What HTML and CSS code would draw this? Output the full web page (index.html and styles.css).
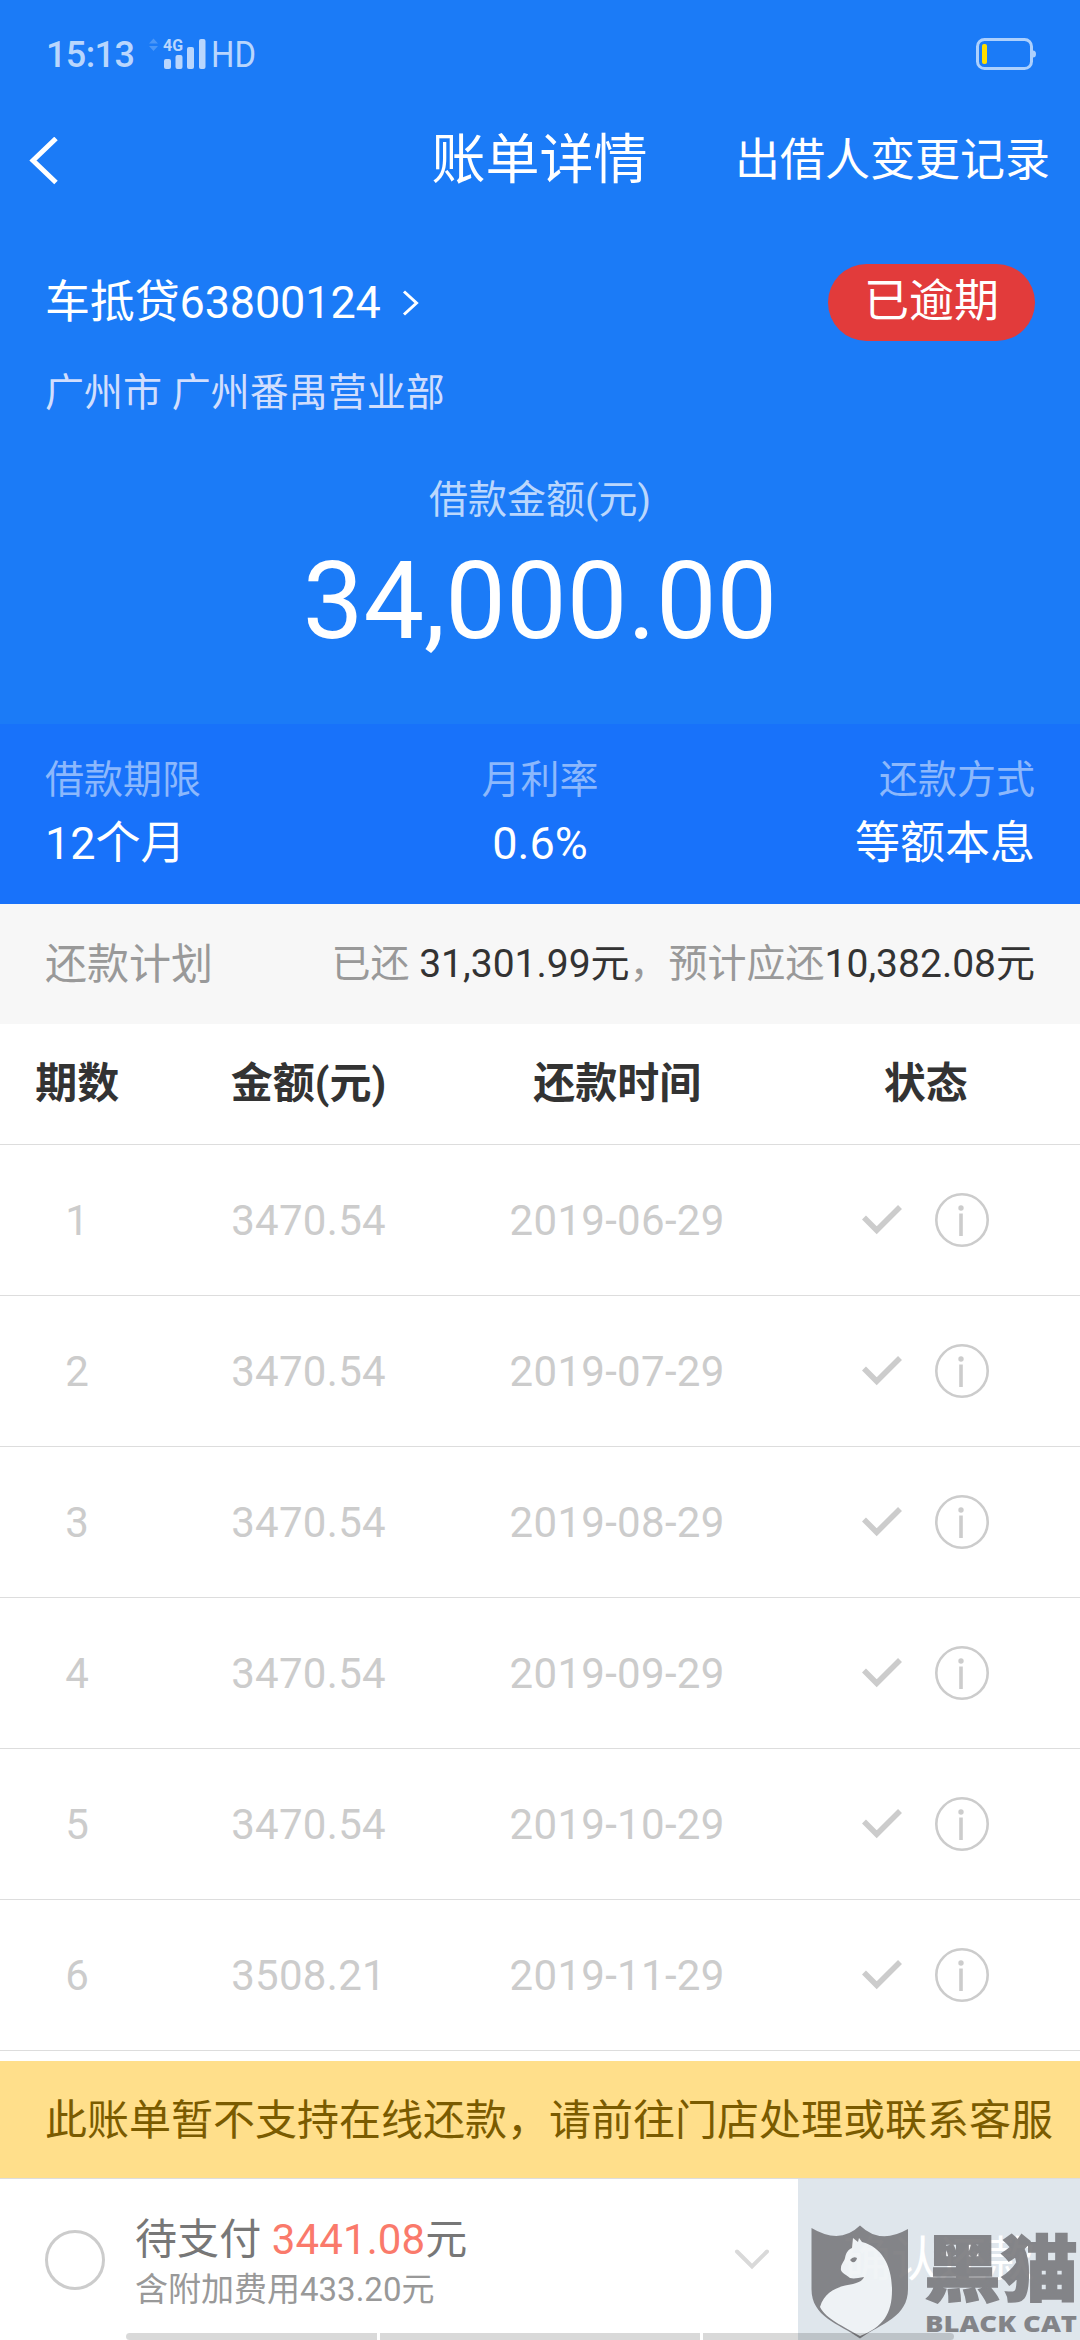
FILE: index.html
```html
<!DOCTYPE html>
<html lang="zh-CN">
<head>
  <meta charset="UTF-8">
  <meta name="viewport" content="width=device-width, initial-scale=1.0">
  <title>账单详情</title>
  <link rel="stylesheet" href="styles.css">
</head>

<body>
  <svg class="symbols">
    <symbol id="check" viewBox="0 0 40 30">
      <path d="M2 12.500L14.700 25.200L38 2" fill="none" stroke="#ccc" stroke-width="5.600"/>
    </symbol>
    <symbol id="info" viewBox="0 0 54 54">
      <circle cx="27" cy="27" r="25.700" fill="none" stroke="#ccc" stroke-width="2.600"/>
      <circle cx="26" cy="15" r="2.700" fill="#ccc"/>
      <path d="M26 20.500V43" stroke="#ccc" stroke-width="3.600"/>
    </symbol>
  </svg>

  <header>
    <div class="status-bar">
      <span class="time">15:13</span>
      <svg class="signal" width="112" height="36" viewBox="0 0 112 36">
        <path d="M0 6.500l4.500-5 4.500 5zM0 9l4.500 5 4.500-5z" opacity=".3"/>
        <rect x="15" y="22" width="7" height="10" rx="2"/>
        <rect x="26.500" y="18" width="7" height="14" rx="2"/>
        <rect x="38" y="10" width="7" height="22" rx="2"/>
        <rect x="50" y="2" width="6.500" height="30" rx="2"/>
        <text x="14" y="14" font-size="17" font-weight="700" textLength="20" lengthAdjust="spacingAndGlyphs">4G</text>
        <text x="62" y="30" font-size="36.500" textLength="45" lengthAdjust="spacingAndGlyphs">HD</text>
      </svg>
      <svg class="battery" width="62" height="34" viewBox="0 0 62 34">
        <rect x="1.500" y="1.500" width="54" height="29" rx="7" fill="none" stroke="#acd0fd" stroke-width="3"/>
        <path d="M57 12.500a3 3.500 0 0 1 0 7z" fill="#acd0fd"/>
        <rect x="6" y="6" width="5" height="20" rx="2" fill="#fd0"/>
      </svg>
    </div>
    <nav>
      <svg class="back" width="30" height="48" viewBox="0 0 30 48">
        <path d="M27 1.500L4 23.500l23 22" fill="none" stroke="#fff" stroke-width="5"/>
      </svg>
      <h1>账单详情</h1>
      <a class="record">出借人变更记录</a>
    </nav>
  </header>

  <section class="loan">
    <div class="loan-title">
      <span class="loan-name">车抵贷63800124</span>
      <svg width="18" height="26" viewBox="0 0 18 26">
        <path d="M2 1.500L14.500 13L2 24.500" fill="none" stroke="#fff" stroke-width="3"/>
      </svg>
      <span class="badge">已逾期</span>
    </div>
    <div class="branch">广州市 广州番禺营业部</div>
    <div class="amount-label">借款金额(元)</div>
    <div class="amount">34,000.00</div>
  </section>

  <section class="terms">
    <div>
      <label>借款期限</label>
      <p>12个月</p>
    </div>
    <div>
      <label>月利率</label>
      <p>0.6%</p>
    </div>
    <div>
      <label>还款方式</label>
      <p>等额本息</p>
    </div>
  </section>

  <div class="plan">
    <span class="plan-title">还款计划</span>
    <span>已还 <b>31,301.99元</b>，预计应还<b>10,382.08元</b></span>
  </div>

  <main>
    <div class="row head">
      <span>期数</span><span>金额(元)</span><span>还款时间</span><span>状态</span>
    </div>
    <div class="row">
      <span>1</span><span>3470.54</span><span>2019-06-29</span>
      <span class="state"><svg class="check"><use href="#check"/></svg><svg class="info"><use href="#info"/></svg></span>
    </div>
    <div class="row">
      <span>2</span><span>3470.54</span><span>2019-07-29</span>
      <span class="state"><svg class="check"><use href="#check"/></svg><svg class="info"><use href="#info"/></svg></span>
    </div>
    <div class="row">
      <span>3</span><span>3470.54</span><span>2019-08-29</span>
      <span class="state"><svg class="check"><use href="#check"/></svg><svg class="info"><use href="#info"/></svg></span>
    </div>
    <div class="row">
      <span>4</span><span>3470.54</span><span>2019-09-29</span>
      <span class="state"><svg class="check"><use href="#check"/></svg><svg class="info"><use href="#info"/></svg></span>
    </div>
    <div class="row">
      <span>5</span><span>3470.54</span><span>2019-10-29</span>
      <span class="state"><svg class="check"><use href="#check"/></svg><svg class="info"><use href="#info"/></svg></span>
    </div>
    <div class="row">
      <span>6</span><span>3508.21</span><span>2019-11-29</span>
      <span class="state"><svg class="check"><use href="#check"/></svg><svg class="info"><use href="#info"/></svg></span>
    </div>
  </main>

  <div class="notice">此账单暂不支持在线还款，请前往门店处理或联系客服</div>

  <footer>
    <div class="radio"></div>
    <div class="pay">
      <div class="pay-total">待支付 <em>3441.08</em>元</div>
      <div class="pay-fee">含附加费用433.20元</div>
    </div>
    <svg class="down" width="36" height="24" viewBox="0 0 36 24">
      <path d="M3 3.500l15 15 15-15" fill="none" stroke="#d9d9d9" stroke-width="4" stroke-linecap="round"/>
    </svg>
    <div class="confirm">确认还款</div>

    <!-- 黑猫水印 -->
    <svg class="watermark" width="282" height="125" viewBox="0 0 282 125">
      <path d="M13.500 13Q42 30 62 10.500Q82 30 110 14V74C110 102 84 108 62 123.500C40 108 13.500 102 13.500 74Z" fill="#7c7c80"/>
      <path d="M55 23L60 27L61 23L64 27C84 32 94 51 94 75C94 99 85 112 62 121C45 111 28 104 22 92C27 75 42 71 55 69C62 67 65 65 66 62C60 63 56 64 52 63C46 58 42 57 43 53C43 49 46 47 47 43C48 37 51 34 54 33Z" fill="#f0f4f6"/>
      <path d="M52 45q3-4 7-2q-1 5-5 4z" fill="#7c7c80"/>
      <g fill="#7c7c80">
        <text class="wm-cn" x="126" y="80" textLength="154" lengthAdjust="spacingAndGlyphs">黑猫</text>
        <text class="wm-en" x="127" y="117" textLength="152" lengthAdjust="spacingAndGlyphs">BLACK CAT</text>
      </g>
    </svg>
    <div class="gesture-bar"><i></i><i></i><i></i></div>
  </footer>
</body>
</html>
```
FILE: styles.css
```css
* {
  box-sizing: border-box;
}

body {
  margin: 0;
  width: 1080px;
  height: 2340px;
  overflow: hidden;
  background: #fff;
  font-family: Roboto, "Noto Sans CJK SC", sans-serif;
  color: #333;
}

.symbols {
  display: none;
}

header {
  height: 240px;
  background: #1b7bf7;
  color: #fff;
}

.status-bar {
  height: 110px;
  padding: 0 42px 0 46px;
  display: flex;
  align-items: center;
}

.time {
  width: 103px;
  font-size: 36px;
  line-height: 44px;
  letter-spacing: -.6px;
  color: #b9d6fd;
  font-weight: 500;
}

.signal {
  fill: #b9d6fd;
  overflow: visible;
}

.battery {
  margin-left: auto;
}

nav {
  height: 100px;
  padding: 1px 30px 0 29px;
  display: grid;
  grid-template-columns: 1fr auto 1fr;
  align-items: center;
}

h1 {
  margin: 0;
  font-size: 54px;
  line-height: 80px;
  font-weight: 400;
}

.record {
  justify-self: end;
  font-size: 45px;
  line-height: 66px;
}

.loan {
  height: 484px;
  padding: 24px 45px 0;
  background: #1b7bf7;
  color: #fff;
}

.loan-title {
  height: 77px;
  display: flex;
  align-items: center;
  font-size: 45px;
  line-height: 66px;
}

.loan-name {
  letter-spacing: -.15px;
}

.loan-title svg {
  margin-left: 21px;
}

.badge {
  margin-left: auto;
  padding: 0 36px;
  height: 77px;
  line-height: 75px;
  border-radius: 39px;
  background: #e23b3b;
}

.branch {
  margin-top: 23px;
  font-size: 39px;
  line-height: 58px;
  color: #d1defd;
}

.amount-label {
  margin-top: 49px;
  font-size: 39px;
  line-height: 58px;
  text-align: center;
  color: #bad7fd;
}

.amount {
  font-size: 108px;
  line-height: 144px;
  text-align: center;
}

.terms {
  height: 180px;
  padding: 27px 45px 0;
  display: grid;
  grid-template-columns: 1fr 1fr 1fr;
  background: #1872fa;
  color: #fff;
}

.terms div:nth-child(2) {
  text-align: center;
}

.terms div:nth-child(3) {
  text-align: right;
}

.terms label {
  display: block;
  font-size: 39px;
  line-height: 58px;
  color: #8cb8fc;
}

.terms p {
  margin: 2px 0 0;
  font-size: 45px;
  line-height: 66px;
}

.plan {
  height: 120px;
  padding: 0 45px 8px;
  display: flex;
  justify-content: space-between;
  align-items: center;
  background: #f7f7f7;
  font-size: 39px;
  color: #999;
}

.plan-title {
  font-size: 42px;
}

.plan b {
  font-weight: 400;
  color: #333;
}

main {
  height: 1037px;
}

.row {
  height: 151px;
  display: grid;
  grid-template-columns: 1fr 2fr 2fr 2fr;
  align-items: center;
  text-align: center;
  border-bottom: 1px solid #ddd;
  font-size: 42px;
  letter-spacing: .3px;
  color: #ccc;
}

.row.head {
  height: 121px;
  padding-bottom: 9px;
  font-weight: 700;
  letter-spacing: 0;
  color: #333;
}

.state {
  display: flex;
  justify-content: center;
  align-items: center;
}

.check {
  width: 40px;
  height: 30px;
  margin-right: 33px;
}

.info {
  width: 54px;
  height: 54px;
}

.notice {
  height: 118px;
  padding: 1px 0 0 45px;
  border-bottom: 1px solid #ddd;
  background: #ffdf8b;
  font-size: 42px;
  line-height: 118px;
  white-space: nowrap;
  color: #7a5b00;
}

footer {
  position: relative;
  height: 161px;
  padding-left: 45px;
  display: flex;
  align-items: center;
}

.radio {
  width: 60px;
  height: 60px;
  border: 3px solid #ccc;
  border-radius: 50%;
}

.pay {
  margin-left: 30px;
}

.pay-total {
  font-size: 42px;
  line-height: 60px;
  letter-spacing: .1px;
  color: #777;
}

.pay-total em {
  font-style: normal;
  color: #fa7a6b;
}

.pay-fee {
  font-size: 33px;
  line-height: 40px;
  color: #999;
}

.down {
  margin-left: auto;
  margin-right: 28px;
}

.confirm {
  width: 282px;
  height: 161px;
  line-height: 161px;
  background: #dfe6ec;
  color: #fff;
  font-size: 48px;
  text-align: center;
}

.watermark {
  position: absolute;
  right: 0;
  bottom: 0;
  opacity: .92;
}

.wm-cn {
  font-size: 72px;
  font-weight: 900;
  stroke: #7c7c80;
  stroke-width: 1.5px;
}

.wm-en {
  font-family: "Open Sans", sans-serif;
  font-size: 22px;
  font-weight: 800;
}

/* 底部手势条 */
.gesture-bar {
  position: absolute;
  left: 126px;
  bottom: 0;
  width: 828px;
  height: 7px;
  display: grid;
  grid-template-columns: 251px 320px 251px;
  gap: 3px;
}

.gesture-bar i {
  background: rgba(0, 0, 0, .15);
}

.gesture-bar i:first-child {
  border-radius: 4px 0 0 4px;
}

.gesture-bar i:last-child {
  border-radius: 0 4px 4px 0;
}
```
